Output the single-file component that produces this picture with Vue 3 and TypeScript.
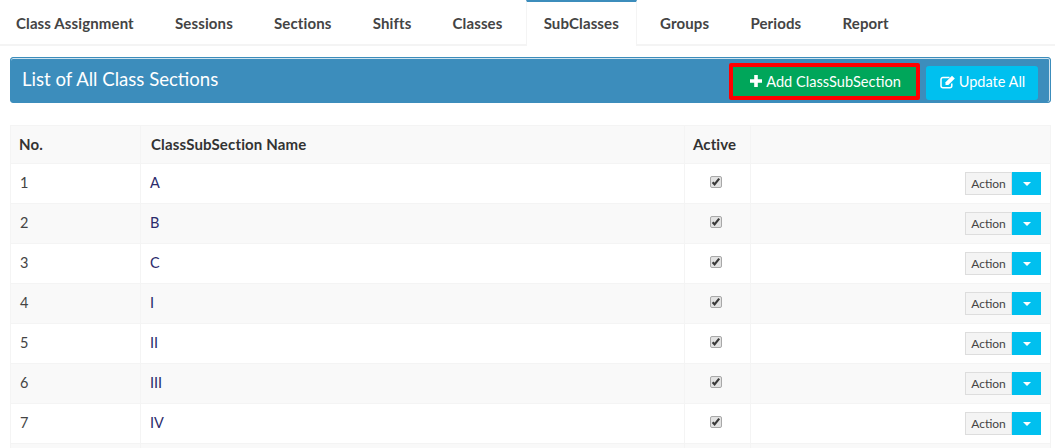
<script setup lang="ts">
const tabs: string[] = ['Class Assignment', 'Sessions', 'Sections', 'Shifts', 'Classes', 'SubClasses', 'Groups', 'Periods', 'Report']
const rows: { no: number; name: string }[] = [
  { no: 1, name: 'A' },
  { no: 2, name: 'B' },
  { no: 3, name: 'C' },
  { no: 4, name: 'I' },
  { no: 5, name: 'II' },
  { no: 6, name: 'III' },
  { no: 7, name: 'IV' },
  { no: 8, name: '' },
]
</script>

<template>
  <div class="page">
    <nav class="tabs">
      <a v-for="t in tabs" :key="t" class="tab" :class="{ active: t === 'SubClasses' }">{{ t }}</a>
    </nav>
    <header class="bar">
      <h3>List of All Class Sections</h3>
      <div class="bar-actions">
        <button class="btn add">
          <svg width="12" height="12" viewBox="0 0 12 12"><path d="M4.2 0h3.6v4.2H12v3.6H7.8V12H4.2V7.8H0V4.2h4.2z" fill="#fff" /></svg>
          <span>Add ClassSubSection</span>
        </button>
        <button class="btn update">
          <svg width="16" height="14" viewBox="0 0 16 14" fill="none">
            <path d="M11.8 8.5v2.2a2 2 0 0 1-2 2H3a2 2 0 0 1-2-2V4.5a2 2 0 0 1 2-2h6.5" stroke="#fff" stroke-width="1.5" />
            <path d="M5.5 10V7.2L12 .8 14.8 3.6 8.3 10z" fill="#fff" />
          </svg>
          <span>Update All</span>
        </button>
      </div>
    </header>
    <table class="grid">
      <colgroup>
        <col class="c1" /><col class="c2" /><col class="c3" /><col />
      </colgroup>
      <thead>
        <tr><th class="h-no">No.</th><th class="h-name">ClassSubSection Name</th><th class="h-no">Active</th><th></th></tr>
      </thead>
      <tbody>
        <tr v-for="r in rows" :key="r.no">
          <td class="num">{{ r.no < 8 ? r.no : '' }}</td>
          <td class="name">{{ r.name }}</td>
          <td class="mark">
            <span v-if="r.no < 8" class="check">
              <svg width="10" height="10" viewBox="0 0 10 10"><path d="M1.6 5.2l2 2.2L8.2 1.6" fill="none" stroke="#3a3a3a" stroke-width="2.2" /></svg>
            </span>
          </td>
          <td class="right">
            <span v-if="r.no < 8" class="action"><span class="a-label">Action</span><span class="a-caret"></span></span>
          </td>
        </tr>
      </tbody>
    </table>
  </div>
</template>

<style>
html, body { margin: 0; background: #fff; overflow: hidden; }
</style>

<style scoped>
.page {
  width: 1055px;
  height: 448px;
  overflow: hidden;
  font-family: "Lato", "Noto Sans", sans-serif;
  font-size: 14px;
  color: #333;
}
.tabs {
  display: flex;
  height: 44px;
  margin-left: -2px;
  border-bottom: 2px solid #f4f4f4;
}
.tab {
  height: 44px;
  box-sizing: border-box;
  padding: 0 18px;
  margin-right: 5.2px;
  line-height: 47px;
  font-weight: 700;
  font-size: 15px;
  letter-spacing: 0.12px;
  color: #444;
}
.tab.active {
  border-top: 2px solid #3c8dbc;
  border-left: 1px solid #f4f4f4;
  border-right: 1px solid #f4f4f4;
  height: 46px;
  background: #fff;
  line-height: 43px;
  padding: 0 17px;
}
.bar {
  margin: 11px 4px 0 10px;
  height: 46px;
  box-sizing: border-box;
  background: #3c8dbc;
  border: 1px solid #3c8dbc;
  border-radius: 3px;
  box-shadow: inset 0 1px 0 #cfe3ef, inset -1px 0 0 #cfe3ef;
  display: flex;
  align-items: center;
  justify-content: space-between;
  padding: 0 12px 0 11px;
}
.bar h3 {
  margin: -2px 0 0;
  font-size: 18.6px;
  font-weight: 400;
  color: #fff;
}
.bar-actions { display: flex; align-items: flex-end; gap: 6px; margin-top: 2px; }
.btn {
  font: inherit;
  color: #fff;
  border: none;
  display: flex;
  align-items: center;
  justify-content: center;
  gap: 4px;
  padding: 0;
}
.add {
  width: 191px;
  height: 37px;
  box-sizing: border-box;
  background: #00a65a;
  border: 4px solid #f00;
  border-radius: 2px;
  font-size: 14.6px;
  padding-left: 2px;
}
.update {
  width: 112px;
  height: 34px;
  background: #00c0ef;
  border-radius: 3px;
  font-size: 14.5px;
  gap: 3px;
  padding: 0 0 2px 1px;
}
.grid {
  margin: 22px 0 0 10px;
  width: 1041px;
  table-layout: fixed;
  border-collapse: collapse;
}
.c1 { width: 130px; }
.c2 { width: 544px; }
.c3 { width: 66px; }
.grid thead tr { height: 38px; }
.grid tbody tr { height: 40px; }
.grid th, .grid td {
  border: 1px solid #f4f4f4;
  padding: 0 9px;
  text-align: left;
  font-size: 15px;
}
.grid th { font-weight: 700; letter-spacing: 0.2px; color: #333; background: #f9f9f9; padding-bottom: 1px; }
.grid .h-no { padding-left: 8px; letter-spacing: 0.1px; }
.grid .h-name { padding-left: 10px; letter-spacing: 0.15px; }
.grid td { padding-bottom: 2px; font-size: 14.5px; }
.grid tbody tr:nth-child(even) td { background: #f9f9f9; }
.grid .right { text-align: right; padding-bottom: 0; }
.num { color: #444; }
.name { color: #2b2b6b; }
.grid .mark { padding: 0 0 3px 25px; }
.check {
  display: flex;
  align-items: center;
  justify-content: center;
  width: 12px;
  height: 12px;
  border: 1px solid #a8a8a8;
  border-radius: 2px;
  background: #e2e2e2;
  box-sizing: border-box;
}
.check svg { flex: none; }
.action { display: inline-flex; height: 23px; vertical-align: middle; }
.a-label {
  width: 47px;
  box-sizing: border-box;
  border: 1px solid #ddd;
  background: #f4f4f4;
  font-size: 12px;
  line-height: 21px;
  text-align: center;
  color: #444;
}
.a-caret {
  width: 29px;
  background: #00c0ef;
  display: flex;
  align-items: center;
  justify-content: center;
}
.a-caret::after {
  content: "";
  border-left: 4px solid transparent;
  border-right: 4px solid transparent;
  border-top: 4px solid #fff;
}
</style>
